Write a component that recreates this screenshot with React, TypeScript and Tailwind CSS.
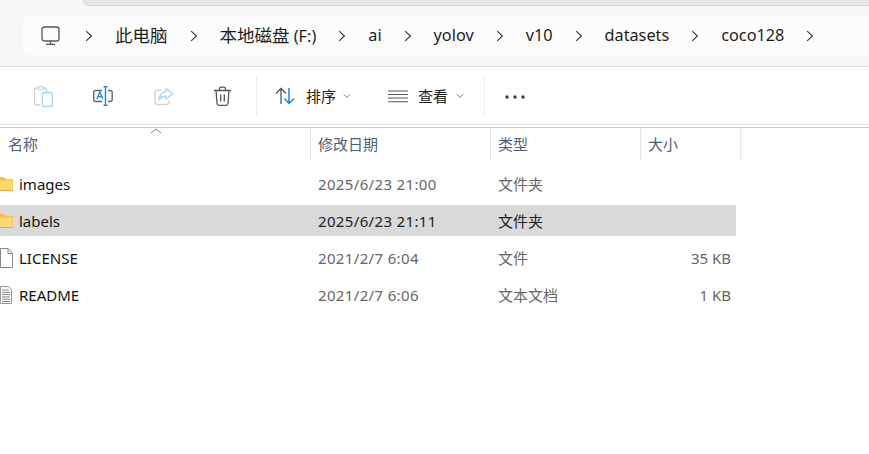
import React from "react";

const font = { fontFamily: '"Noto Sans", "Noto Sans CJK SC", sans-serif' };

function Chevron() {
  return (
    <svg width="8" height="12" viewBox="0 0 8 12" fill="none" className="shrink-0">
      <path d="M1.200 1.200 L6.400 6 L1.200 10.800" stroke="#333" strokeWidth="1.100" />
    </svg>
  );
}

function Down() {
  return (
    <svg width="8" height="6" viewBox="0 0 8 6" fill="none" className="shrink-0">
      <path d="M.8 1.200 L4 4.400 L7.200 1.200" stroke="#777" strokeWidth="1" />
    </svg>
  );
}

function Monitor() {
  return (
    <svg width="20" height="20" viewBox="0 0 20 20" fill="none">
      <rect x="1" y="1" width="17" height="14" rx="2.600" stroke="#555" strokeWidth="1.300" />
      <path d="M9.500 15v3M5 18.300h9" stroke="#555" strokeWidth="1.300" />
    </svg>
  );
}

function Paste() {
  return (
    <svg width="19" height="21" viewBox="0 0 19 21" fill="none">
      <path d="M6 19H2.500a2 2 0 0 1-2-2V4a2 2 0 0 1 2-2h8a2 2 0 0 1 2 2v2" stroke="#d0d0d0" strokeWidth="1.300" />
      <rect x="3.800" y="0.700" width="5.500" height="2.800" rx="1.200" stroke="#d0d0d0" strokeWidth="1.200" fill="#fff" />
      <rect x="8.300" y="6.500" width="10" height="14" rx="2" stroke="#a9d5f5" strokeWidth="1.300" />
    </svg>
  );
}

function Rename() {
  return (
    <svg width="20" height="20" viewBox="0 0 20 20" fill="none">
      <path d="M9 4.500H2.800a2 2 0 0 0-2 2v7a2 2 0 0 0 2 2H9M15 4.500h2.200a2 2 0 0 1 2 2v7a2 2 0 0 1-2 2H15" stroke="#666" strokeWidth="1.400" />
      <path d="M3.800 13 L6.800 6 L9.800 13 M4.900 10.600h3.800" stroke="#1c86dd" strokeWidth="1.300" />
      <path d="M12.500 .7v18.600M10.500 .7h4M10.500 19.300h4" stroke="#1c86dd" strokeWidth="1.400" />
    </svg>
  );
}

function Share() {
  return (
    <svg width="20" height="19" viewBox="0 0 20 19" fill="none">
      <path d="M7 3H3.500a2.500 2.500 0 0 0-2.500 2.500v9.500A2.500 2.500 0 0 0 3.500 17.500h9A2.500 2.500 0 0 0 15 15v-1.500" stroke="#d2d2d2" strokeWidth="1.400" />
      <path d="M12 1.500 L18.800 6.800 L12 12 V9 C8.500 9 6.500 10.500 5 13 C5.500 8.500 8 5 12 4.500 Z" stroke="#a9d5f5" strokeWidth="1.300" strokeLinejoin="round" />
    </svg>
  );
}

function Trash() {
  return (
    <svg width="19" height="21" viewBox="0 0 19 21" fill="none">
      <path d="M1 4.500h17M6.500 4.500V3a1.800 1.800 0 0 1 1.800-1.800h2.400A1.800 1.800 0 0 1 12.500 3v1.500" stroke="#555" strokeWidth="1.300" />
      <path d="M3 4.500 L4 17.500a2 2 0 0 0 2 1.800h7a2 2 0 0 0 2-1.800 L16 4.500" stroke="#555" strokeWidth="1.300" />
      <path d="M7.700 8.500v7M11.300 8.500v7" stroke="#555" strokeWidth="1.300" />
    </svg>
  );
}

function Sort() {
  return (
    <svg width="20" height="18" viewBox="0 0 20 18" fill="none">
      <path d="M6 17V1.500M1 6.500 L6 1.500 L11 6.500" stroke="#555" strokeWidth="1.300" />
      <path d="M14 1v15.500M9.500 11.500 L14 16.500 L19 11.500" stroke="#1c86dd" strokeWidth="1.500" />
    </svg>
  );
}

function Lines() {
  return (
    <svg width="20" height="13" viewBox="0 0 20 13" fill="none">
      <path d="M0 1h20M0 4.500h20M0 8h20M0 11.800h20" stroke="#555" strokeWidth="1.100" />
    </svg>
  );
}

function Folder() {
  return (
    <svg width="13" height="14" viewBox="0 0 13 14" fill="none">
      <path d="M0 0h3.500L6 2.200h7V14H0Z" fill="#f3bd45" />
      <rect x="0" y="3.500" width="12.500" height="10" fill="#fdd96f" />
      <path d="M0 13.500h13" stroke="#e8ae3a" />
    </svg>
  );
}

function FileIcon() {
  return (
    <svg width="13" height="20" viewBox="0 0 13 20" fill="none">
      <path d="M.5.500H8L12.500 5.500V19.500H.500Z" fill="#fff" stroke="#888" />
      <path d="M8 .500V5.500h4.500" stroke="#888" />
    </svg>
  );
}

function TextIcon() {
  return (
    <svg width="12" height="18" viewBox="0 0 12 18" fill="none">
      <path d="M.5.500H8.500L11.500 3.500V17.500H.500Z" fill="#fff" stroke="#999" />
      <path d="M2 4h7M2 6.300h8M2 8.600h8M2 10.900h8M2 13.200h8M2 15.500h8" stroke="#888" />
    </svg>
  );
}

const crumbs: React.ReactNode[] = [
  <span className="text-[17.500px]">此电脑</span>,
  <>
    <span className="text-[17.500px]">本地磁盘</span> (F:)
  </>,
  "ai",
  "yolov",
  "v10",
  "datasets",
  "coco128",
];

const rows = [
  { name: "images", date: "2025/6/23 21:00", type: "文件夹", size: "", icon: <Folder />, sel: false },
  { name: "labels", date: "2025/6/23 21:11", type: "文件夹", size: "", icon: <Folder />, sel: true },
  { name: "LICENSE", date: "2021/2/7 6:04", type: "文件", size: "35 KB", icon: <FileIcon />, sel: false },
  { name: "README", date: "2021/2/7 6:06", type: "文本文档", size: "1 KB", icon: <TextIcon />, sel: false },
];

export default function App() {
  return (
    <div style={font} className="w-[869px] h-[454px] overflow-hidden bg-white">
      <div className="h-[67px] bg-[#f7f7f7] border-b border-[#dcdcdc]">
        <div className="ml-[83px] h-[6px] bg-[#e6e6e6] border-b border-l border-[#d8d8d8] rounded-bl-md" />
        <div className="ml-[23px] mt-[10px] h-[39px] pl-[18px] bg-[#fcfcfc] rounded-l-md flex items-center text-[16.250px] text-[#1c1c1c] gap-[22px]">
          <span className="mr-[2px]"><Monitor /></span>
          <Chevron />
          {crumbs.map((c, i) => (
            <React.Fragment key={i}>
              <span className="whitespace-nowrap leading-none">{c}</span>
              <Chevron />
            </React.Fragment>
          ))}
        </div>
      </div>

      <div className="h-[57px] flex items-center pl-[34px] pt-[1px] text-[15px] text-[#222]">
        <Paste />
        <span className="ml-[40px]"><Rename /></span>
        <span className="ml-[41px]"><Share /></span>
        <span className="ml-[39px]"><Trash /></span>
        <div className="ml-[24px] w-px h-[40px] bg-[#ececec]" />
        <span className="ml-[18px]"><Sort /></span>
        <span className="ml-[11px] mt-[1px]">排序</span>
        <span className="ml-[7px]"><Down /></span>
        <span className="ml-[37px]"><Lines /></span>
        <span className="ml-[10px] mt-[1px]">查看</span>
        <span className="ml-[8px]"><Down /></span>
        <div className="ml-[20px] w-px h-[40px] bg-[#ececec]" />
        <svg width="20" height="4" viewBox="0 0 20 4" className="ml-[20px] mt-[2px]">
          <circle cx="2" cy="2" r="1.700" fill="#333" />
          <circle cx="10" cy="2" r="1.700" fill="#333" />
          <circle cx="18" cy="2" r="1.700" fill="#333" />
        </svg>
      </div>

      <div className="border-t border-[#dcdcdc] h-[3px]" />
      <div className="border-t border-[#c8c8c8] relative">
        <svg width="12" height="6" viewBox="0 0 12 6" fill="none" className="absolute left-[150px] top-[0px]">
          <path d="M1 5 L6 1 L11 5" stroke="#888" />
        </svg>
        <div className="grid grid-cols-[310px_180px_150px_101px] h-[32px] text-[15px] text-[#4c607a] w-[741px]">
          <div className="pl-[8px] flex items-center">名称</div>
          <div className="pl-[7px] flex items-center border-l border-[#e5e5e5]">修改日期</div>
          <div className="pl-[7px] flex items-center border-l border-[#e5e5e5]">类型</div>
          <div className="pl-[7px] flex items-center border-l border-r border-[#e5e5e5]">大小</div>
        </div>
      </div>

      <div className="mt-[8px] flex flex-col gap-[6px] w-[736px] text-[15px]">
        {rows.map((r) => (
          <div
            key={r.name}
            className={`grid grid-cols-[311px_180px_150px_95px] h-[31px] items-center ${r.sel ? "bg-[#d9d9d9]" : ""}`}
          >
            <div className="flex items-center text-[#111]">
              <span className="w-[19px] shrink-0 flex">{r.icon}</span>
              <span className="pt-[1px]">{r.name}</span>
            </div>
            <div className={`pl-[7px] pt-[1px] tracking-[0.350px] ${r.sel ? "text-[#222]" : "text-[#666]"}`}>{r.date}</div>
            <div className={`pl-[7px] pt-[1px] ${r.sel ? "text-[#222]" : "text-[#666]"}`}>{r.type}</div>
            <div className="pr-[5px] pt-[1px] text-right text-[#666]">{r.size}</div>
          </div>
        ))}
      </div>
    </div>
  );
}
